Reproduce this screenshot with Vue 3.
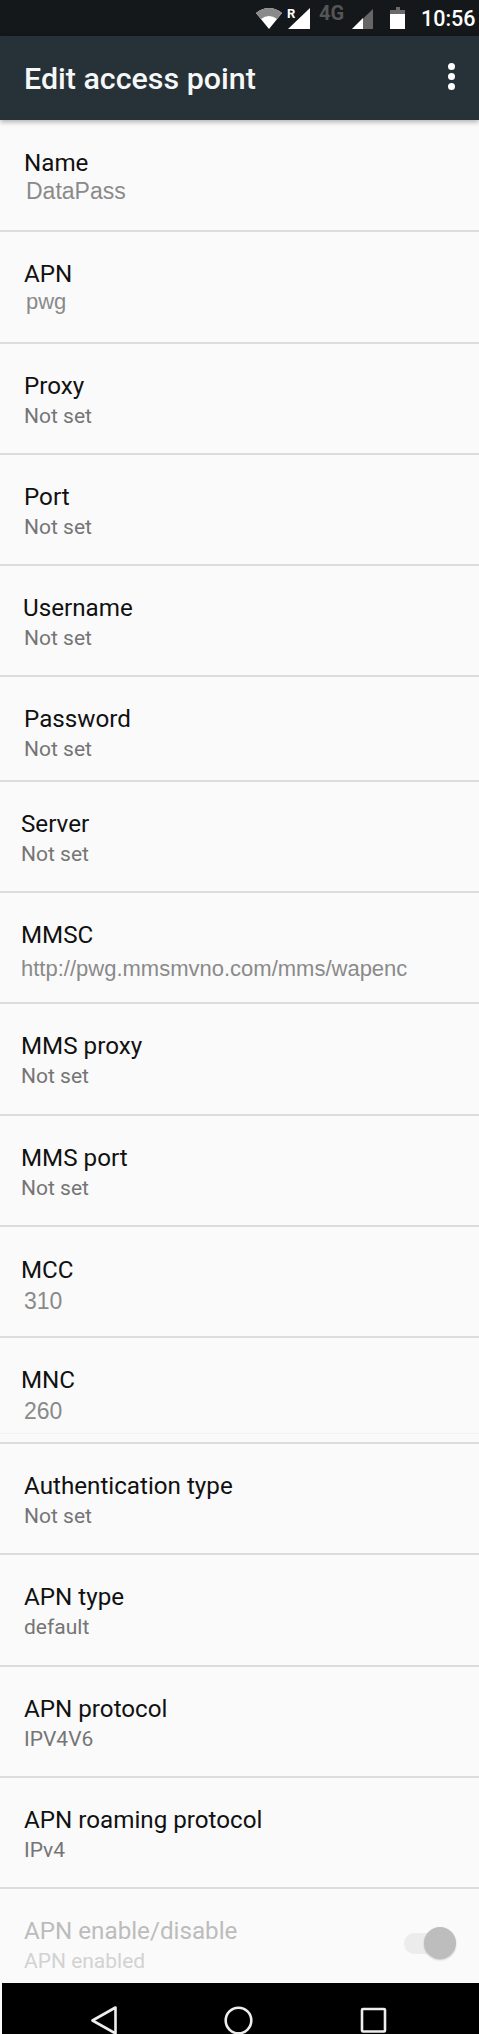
<script setup>
const rows = [
  { t: 'Name', s: 'DataPass', h: 112, x: 24, sx: 26, pad: 28, gap: 1, alt: true },
  { t: 'APN', s: 'pwg', h: 112, x: 24, sx: 26, pad: 27, gap: 1, alt: true, compact: true },
  { t: 'Proxy', s: 'Not set', h: 111, x: 24, sx: 24, pad: 27, gap: 3 },
  { t: 'Port', s: 'Not set', h: 111, x: 24, sx: 24, pad: 27, gap: 3 },
  { t: 'Username', s: 'Not set', h: 111, x: 23, sx: 24, pad: 27, gap: 3 },
  { t: 'Password', s: 'Not set', h: 105, x: 24, sx: 24, pad: 27, gap: 3 },
  { t: 'Server', s: 'Not set', h: 111, x: 21, sx: 21, pad: 27, gap: 3 },
  { t: 'MMSC', s: 'http://pwg.mmsmvno.com/mms/wapenc', h: 111, x: 21, sx: 21, pad: 27, gap: 7, alt: true, compact: true },
  { t: 'MMS proxy', s: 'Not set', h: 112, x: 21, sx: 21, pad: 27, gap: 3 },
  { t: 'MMS port', s: 'Not set', h: 111, x: 21, sx: 21, pad: 27, gap: 3 },
  { t: 'MCC', s: '310', h: 111, x: 21, sx: 24, pad: 28, gap: 4, alt: true },
  { t: 'MNC', s: '260', h: 106, x: 21, sx: 24, pad: 27, gap: 4, alt: true, seam: true },
  { t: 'Authentication type', s: 'Not set', h: 111, x: 24, sx: 24, pad: 27, gap: 3 },
  { t: 'APN type', s: 'default', h: 112, x: 24, sx: 24, pad: 27, gap: 3 },
  { t: 'APN protocol', s: 'IPV4V6', h: 111, x: 24, sx: 24, pad: 27, gap: 3 },
  { t: 'APN roaming protocol', s: 'IPv4', h: 111, x: 24, sx: 24, pad: 27, gap: 3 },
]
</script>

<template>
  <div class="screen">
    <div class="status">
      <svg class="status-icons" width="240" height="36" viewBox="239 0 240 36">
        <path d="M256 13 Q269 3 282 13 L269 29 Z" fill="#fff" />
        <path d="M256 13 Q269 3 282 13 L277 19 Q269 13 261 19 Z" fill="#8a8a8a" />
        <path d="M288 29 L310 8 L310 29 Z" fill="#fff" />
        <path d="M352 29 L373 9 L373 29 Z" fill="#666" />
        <path d="M352 29 L363 18 L363 29 Z" fill="#fff" />
        <path d="M390 10 L396 10 L396 7 L400 7 L400 10 L405 10 L405 29 L390 29 Z" fill="#fff" />
        <path d="M390 10 L396 10 L396 7 L400 7 L400 10 L405 10 L405 14 L390 14 Z" fill="#6a6a6a" />
      </svg>
      <span class="r">R</span>
      <span class="net">4G</span>
      <span class="time">10:56</span>
    </div>
    <header class="bar">
      <span class="bar-title">Edit access point</span>
      <span class="more"><i></i><i></i><i></i></span>
    </header>
    <main class="list">
      <div
        v-for="r in rows"
        :key="r.t"
        class="row"
        :style="{ height: r.h + 'px', paddingTop: r.pad + 'px' }"
      >
        <div class="title" :style="{ marginLeft: r.x + 'px' }">{{ r.t }}</div>
        <div
          class="sub"
          :class="{ alt: r.alt, compact: r.compact }"
          :style="{ marginLeft: r.sx + 'px', marginTop: r.gap + 'px' }"
        >{{ r.s }}</div>
        <div v-if="r.seam" class="seam"></div>
      </div>
      <div class="row last">
        <div class="last-text">
          <div class="title off">APN enable/disable</div>
          <div class="sub off2">APN enabled</div>
        </div>
        <div class="switch"><span class="thumb"></span></div>
      </div>
    </main>
    <nav class="nav">
      <svg width="477" height="51" viewBox="2 1983 477 51">
        <path d="M115.5 2007.5 L92.5 2020.5 L115.5 2033.5 Z" fill="none" stroke="#eee" stroke-width="2.6" stroke-linejoin="round" />
        <circle cx="238.5" cy="2020.5" r="12.8" fill="none" stroke="#eee" stroke-width="2.6" />
        <rect x="362" y="2009" width="23" height="22.5" rx="1" fill="none" stroke="#eee" stroke-width="2.6" />
      </svg>
    </nav>
  </div>
</template>

<style>
body { margin: 0; background: #fafafa; }
</style>

<style scoped>
.screen {
  width: 479px;
  height: 2034px;
  overflow: hidden;
  display: flex;
  flex-direction: column;
  font-family: Roboto, "Liberation Sans", sans-serif;
  background: #fafafa;
}
.status {
  position: relative;
  height: 36px;
  flex: none;
  background: #14181b;
}
.status-icons { position: absolute; right: 0; top: 0; }
.r {
  position: absolute;
  left: 287px;
  top: 6px;
  font-size: 13px;
  line-height: 15px;
  font-weight: 700;
  color: #fff;
}
.net {
  position: absolute;
  left: 319px;
  top: 2px;
  font-size: 20px;
  line-height: 23px;
  font-weight: 700;
  color: #555;
}
.time {
  position: absolute;
  left: 421px;
  top: 5px;
  font-size: 21.5px;
  line-height: 28px;
  font-weight: 500;
  color: #fff;
}
.bar {
  position: relative;
  z-index: 1;
  height: 84px;
  flex: none;
  display: flex;
  align-items: center;
  justify-content: space-between;
  padding: 0 24px 0 24px;
  background: #263238;
  box-shadow: 0 2px 5px rgba(0, 0, 0, 0.3);
}
.bar-title {
  font-size: 30.4px;
  font-weight: 500;
  color: #f6f7f7;
}
.more {
  display: flex;
  flex-direction: column;
  gap: 3px;
  margin-bottom: 4px;
}
.more i {
  display: block;
  width: 7px;
  height: 7px;
  border-radius: 50%;
  background: #fff;
}
.list {
  flex: 1;
  min-height: 0;
  overflow: hidden;
}
.row {
  position: relative;
  box-sizing: border-box;
  border-bottom: 2px solid #dcdcdc;
}
.title {
  font-size: 24.2px;
  line-height: 30px;
  color: #111;
}
.sub {
  font-size: 21px;
  line-height: 24px;
  color: #757575;
}
.sub.alt {
  font-family: "Liberation Sans", Arial, sans-serif;
  font-size: 23px;
  color: #8a8a8a;
}
.sub.alt.compact { font-size: 22px; }
.seam {
  position: absolute;
  left: 0;
  right: 0;
  bottom: 8px;
  height: 1px;
  background: #f2f2f2;
}
.row.last {
  height: 130px;
  border-bottom: 0;
  padding: 27px 0 0 24px;
  display: flex;
  align-items: flex-start;
  justify-content: space-between;
}
.title.off { color: #bcbcbc; }
.sub.off2 { margin-top: 3px; color: #d2d2d2; }
.switch {
  position: relative;
  width: 41px;
  height: 21px;
  margin: 17px 34px 0 0;
  border-radius: 11px;
  background: #ececec;
}
.thumb {
  position: absolute;
  right: -11px;
  top: -6px;
  width: 32px;
  height: 32px;
  border-radius: 50%;
  background: #bdbdbd;
  box-shadow: 0 1px 2px rgba(0, 0, 0, 0.2);
}
.nav {
  flex: none;
  height: 51px;
  margin-left: 2px;
  background: #000;
}
.nav svg { display: block; }
</style>
